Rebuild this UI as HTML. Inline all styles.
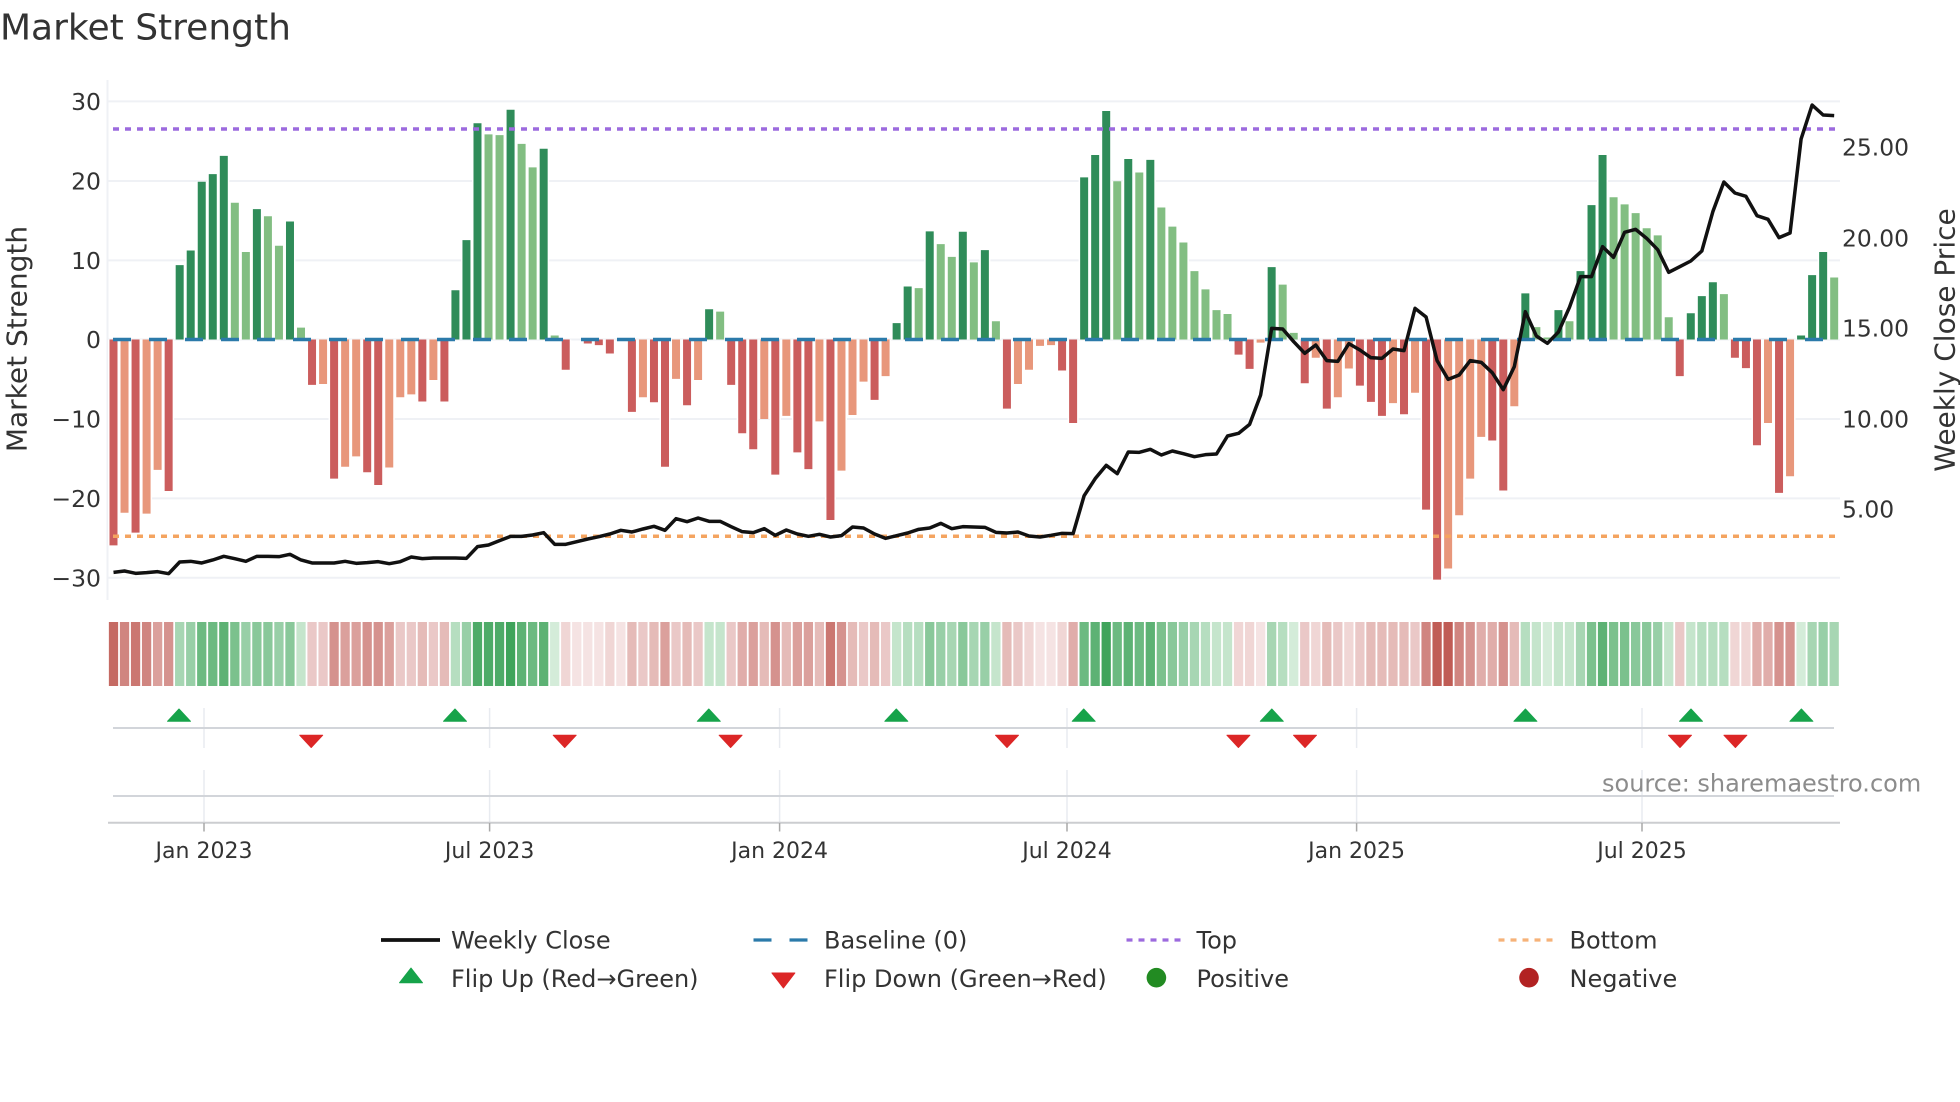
<!DOCTYPE html>
<html lang="en">
<head>
<meta charset="utf-8">
<title>Market Strength</title>
<style>
html,body{margin:0;padding:0;background:#fff;width:1960px;height:1102px;overflow:hidden}
svg{display:block}
text{font-family:"DejaVu Sans","Liberation Sans",sans-serif;fill:#333}
</style>
</head>
<body>
<svg width="1960" height="1102" viewBox="0 0 1960 1102" xmlns="http://www.w3.org/2000/svg">
<rect width="1960" height="1102" fill="#fff"/>
<text x="0" y="39.5" font-size="36">Market Strength</text>

<!-- grid -->
<g stroke="#eff1f5" stroke-width="2" fill="none">
<path d="M108 101.4H1840M108 181H1840M108 260.4H1840M108 339.5H1840M108 419H1840M108 498.4H1840M108 577.8H1840"/>
<path d="M107.5 80V600"/>
</g>

<!-- bars in data coords -->
<defs>
<path id="bd" d="M6 0V-9.36M7 0V-11.2M8 0V-19.85M9 0V-20.8M10 0V-23.1M13 0V-16.4M16 0V-14.85M31 0V-6.2M32 0V-12.5M33 0V-27.2M36 0V-28.9M39 0V-24M54 0V-3.8M71 0V-2.06M72 0V-6.67M74 0V-13.6M77 0V-13.55M79 0V-11.25M88 0V-20.4M89 0V-23.2M90 0V-28.75M92 0V-22.7M94 0V-22.6M105 0V-9.1M128 0V-5.8M131 0V-3.7M133 0V-8.6M134 0V-16.9M135 0V-23.2M143 0V-3.3M144 0V-5.45M145 0V-7.2M153 0V-.5M154 0V-8.1M155 0V-11"/>
<path id="bl" d="M11 0V-17.2M12 0V-11M14 0V-15.5M15 0V-11.8M17 0V-1.5M34 0V-25.8M35 0V-25.7M37 0V-24.6M38 0V-21.65M40 0V-.5M55 0V-3.5M73 0V-6.46M75 0V-12M76 0V-10.4M78 0V-9.7M80 0V-2.3M91 0V-19.9M93 0V-21M95 0V-16.6M96 0V-14.2M97 0V-12.2M98 0V-8.6M99 0V-6.3M100 0V-3.7M101 0V-3.2M106 0V-6.9M107 0V-.84M129 0V-1.55M130 0V-.25M132 0V-2.3M136 0V-17.9M137 0V-17M138 0V-15.9M139 0V-14M140 0V-13.1M141 0V-2.8M146 0V-5.7M156 0V-7.8"/>
<path id="br" d="M0 0V25.9M2 0V24.3M5 0V19.05M18 0V5.7M20 0V17.5M23 0V16.7M24 0V18.3M28 0V7.8M30 0V7.8M41 0V3.8M43 0V.5M44 0V.7M45 0V1.76M47 0V9.1M49 0V7.9M50 0V16M52 0V8.27M56 0V5.7M57 0V11.8M58 0V13.8M60 0V17M62 0V14.2M63 0V16.3M65 0V22.7M69 0V7.6M81 0V8.7M86 0V3.9M87 0V10.5M102 0V1.9M103 0V3.7M108 0V5.5M110 0V8.7M113 0V5.8M114 0V7.85M115 0V9.6M117 0V9.4M119 0V21.4M120 0V30.2M125 0V12.7M126 0V19M142 0V4.6M147 0V2.3M148 0V3.6M149 0V13.3M151 0V19.3"/>
<path id="bo" d="M1 0V21.8M3 0V21.9M4 0V16.4M19 0V5.6M21 0V16M22 0V14.7M25 0V16.1M26 0V7.26M27 0V6.9M29 0V5.1M48 0V7.26M51 0V4.95M53 0V5.1M59 0V10M61 0V9.6M64 0V10.3M66 0V16.5M67 0V9.5M68 0V5.3M70 0V4.6M82 0V5.6M83 0V3.8M84 0V.8M85 0V.7M104 0V.4M109 0V2.3M111 0V7.26M112 0V3.65M116 0V8M118 0V6.7M121 0V28.8M122 0V22.1M123 0V17.5M124 0V12.25M127 0V8.4M150 0V10.5M152 0V17.2"/>
</defs>
<g transform="translate(113.5 339.5) scale(11.03 7.95)" fill="none">
<g stroke="#fff" stroke-width="1">
<use href="#bd"/><use href="#bl"/><use href="#br"/><use href="#bo"/>
</g>
<g stroke-width=".725">
<use href="#bd" stroke="#2f8c59"/>
<use href="#bl" stroke="#82be82"/>
<use href="#br" stroke="#cb5d5d"/>
<use href="#bo" stroke="#e8977b"/>
</g>
</g>

<!-- reference lines -->
<path d="M113 129H1835" stroke="#9c6ade" stroke-width="3.5" stroke-dasharray="6 6" fill="none"/>
<path d="M113 536.3H1835" stroke="#f4a460" stroke-width="3.5" stroke-dasharray="6 6" fill="none"/>
<path d="M113 339.5H1835" stroke="#2b7aaa" stroke-width="3.5" stroke-dasharray="18 18" fill="none"/>

<!-- weekly close -->
<g transform="translate(113.5 320) scale(11.03 .33333)">
<polyline fill="none" stroke="#111" stroke-width="3.5" stroke-linejoin="round" vector-effect="non-scaling-stroke" points="0,757 1,753 2,760 3,758 4,755 5,761 6,726 7,724 8,729 9,720 10,709 11,716 12,724 13,709 14,709 15,710 16,703 17,720 18,729 19,729 20,729 21,724 22,730 23,728 24,725 25,731 26,725 27,711 28,716 29,714 30,714 31,714 32,715 33,680 34,675 35,662 36,649 37,649 38,645 39,638 40,673 41,673 42,665 43,657 44,650 45,642 46,631 47,636 48,627 49,619 50,631 51,596 52,605 53,594 54,604 55,604 56,620 57,635 58,638 59,626 60,646 61,630 62,642 63,649 64,643 65,651 66,647 67,621 68,624 69,642 70,655 71,647 72,639 73,628 74,624 75,610 76,626 77,620 78,621 79,622 80,637 81,639 82,636 83,648 84,651 85,646 86,640 87,641 88,527 89,476 90,436 91,461 92,396 93,397 94,388 95,405 96,393 97,401 98,410 99,404 100,402 101,348 102,340 103,313 104,225 105,25 106,27 107,65 108,100 109,75 110,122 111,124 112,71 113,90 114,113 115,115 116,87 117,92 118,-35 119,-9 120,122 121,178 122,165 123,122 124,127 125,158 126,209 127,140 128,-25 129,48 130,70 131,36 132,-38 133,-130 134,-130 135,-220 136,-188 137,-263 138,-272 139,-245 140,-211 141,-143 142,-160 143,-177 144,-207 145,-325 146,-414 147,-381 148,-371 149,-313 150,-302 151,-247 152,-261 153,-543 154,-645 155,-615 156,-613"/>
</g>

<!-- y ticks -->
<g font-size="23.5" text-anchor="end">
<text x="101" y="110">30</text>
<text x="101" y="189.6">20</text>
<text x="101" y="269">10</text>
<text x="101" y="348.2">0</text>
<text x="101" y="427.6">−10</text>
<text x="101" y="507">−20</text>
<text x="101" y="586.4">−30</text>
</g>
<g font-size="23.4">
<text x="1842" y="155.6">25.00</text>
<text x="1842" y="246.6">20.00</text>
<text x="1842" y="336.6">15.00</text>
<text x="1842" y="427.6">10.00</text>
<text x="1842" y="517.6">5.00</text>
</g>
<text transform="translate(26.5 339) rotate(-90)" font-size="28" text-anchor="middle">Market Strength</text>
<text transform="translate(1954.5 340) rotate(-90)" font-size="28" text-anchor="middle">Weekly Close Price</text>

<!-- heat strip -->
<g transform="translate(113.5 622) scale(11.03 64)" fill="none" stroke-width=".84">
<path stroke="#d4ecd9" d="M40 0v1M107 0v1M130 0v1M153 0v1"/>
<path stroke="#c5e5cc" d="M17 0v1M54 0v1M55 0v1M71 0v1M80 0v1M100 0v1M101 0v1M129 0v1M131 0v1M132 0v1M141 0v1M143 0v1"/>
<path stroke="#b6dec0" d="M31 0v1M72 0v1M73 0v1M99 0v1M106 0v1M128 0v1M144 0v1M145 0v1M146 0v1"/>
<path stroke="#a7d6b3" d="M6 0v1M76 0v1M78 0v1M98 0v1M105 0v1M133 0v1M154 0v1M156 0v1"/>
<path stroke="#98cfa7" d="M7 0v1M12 0v1M15 0v1M32 0v1M75 0v1M79 0v1M97 0v1M140 0v1M155 0v1"/>
<path stroke="#89c89a" d="M13 0v1M14 0v1M16 0v1M74 0v1M77 0v1M96 0v1M138 0v1M139 0v1"/>
<path stroke="#7bc18d" d="M11 0v1M95 0v1M134 0v1M136 0v1M137 0v1"/>
<path stroke="#6cba81" d="M8 0v1M9 0v1M38 0v1M88 0v1M91 0v1M93 0v1"/>
<path stroke="#5db274" d="M10 0v1M37 0v1M39 0v1M89 0v1M92 0v1M94 0v1M135 0v1"/>
<path stroke="#4eab68" d="M33 0v1M34 0v1M35 0v1"/>
<path stroke="#3fa45b" d="M36 0v1M90 0v1"/>
<path stroke="#f5e3e3" d="M42 0v1M43 0v1M44 0v1M46 0v1M84 0v1M85 0v1M104 0v1"/>
<path stroke="#f0d6d5" d="M41 0v1M45 0v1M83 0v1M86 0v1M102 0v1M103 0v1M109 0v1M112 0v1M147 0v1M148 0v1"/>
<path stroke="#eac8c7" d="M18 0v1M19 0v1M26 0v1M27 0v1M29 0v1M48 0v1M51 0v1M53 0v1M56 0v1M68 0v1M70 0v1M82 0v1M108 0v1M111 0v1M113 0v1M118 0v1M142 0v1"/>
<path stroke="#e5bbb8" d="M28 0v1M30 0v1M47 0v1M49 0v1M52 0v1M59 0v1M61 0v1M64 0v1M67 0v1M69 0v1M81 0v1M110 0v1M114 0v1M115 0v1M116 0v1M117 0v1M127 0v1"/>
<path stroke="#e0adaa" d="M57 0v1M87 0v1M124 0v1M125 0v1M149 0v1M150 0v1"/>
<path stroke="#dba09c" d="M4 0v1M21 0v1M22 0v1M25 0v1M50 0v1M58 0v1M62 0v1M63 0v1"/>
<path stroke="#d5928e" d="M5 0v1M20 0v1M23 0v1M24 0v1M60 0v1M66 0v1M123 0v1M126 0v1M151 0v1M152 0v1"/>
<path stroke="#d08580" d="M1 0v1M3 0v1M119 0v1M122 0v1"/>
<path stroke="#cb7771" d="M2 0v1M65 0v1"/>
<path stroke="#c56a63" d="M0 0v1"/>
<path stroke="#c05c55" d="M120 0v1M121 0v1"/>
</g>

<!-- marker rows -->
<g stroke="#e8ebf0" stroke-width="1.5" fill="none">
<path d="M204 708V748M204 770V823M489.6 708V748M489.6 770V823M779.6 708V748M779.6 770V823M1067 708V748M1067 770V823M1356.6 708V748M1356.6 770V823M1642 708V748M1642 770V823"/>
</g>
<path d="M113 728H1834M113 796H1834" stroke="#d2d5da" stroke-width="2" fill="none"/>
<path d="M108 822.7H1840" stroke="#cccdd0" stroke-width="2" fill="none"/>
<path d="M204 823V831.5M489.6 823V831.5M779.6 823V831.5M1067 823V831.5M1356.6 823V831.5M1642 823V831.5" stroke="#a8a8a8" stroke-width="1.5" fill="none"/>

<g fill="#16a34a" stroke="#16a34a" stroke-width="1" stroke-linejoin="round">
<polygon points="179,709 190.5,721.3 167.5,721.3"/>
<polygon points="455,709 466.5,721.3 443.5,721.3"/>
<polygon points="708.8,709 720.3,721.3 697.3,721.3"/>
<polygon points="896.3,709 907.8,721.3 884.8,721.3"/>
<polygon points="1083.7,709 1095.2,721.3 1072.2,721.3"/>
<polygon points="1271.8,709 1283.3,721.3 1260.3,721.3"/>
<polygon points="1525.4,709 1536.9,721.3 1513.9,721.3"/>
<polygon points="1691,709 1702.5,721.3 1679.5,721.3"/>
<polygon points="1801.4,709 1812.9,721.3 1789.9,721.3"/>
</g>
<g fill="#dc2626" stroke="#dc2626" stroke-width="1" stroke-linejoin="round">
<polygon points="311.2,747.5 322.7,735.2 299.7,735.2"/>
<polygon points="564.7,747.5 576.2,735.2 553.2,735.2"/>
<polygon points="730.6,747.5 742.1,735.2 719.1,735.2"/>
<polygon points="1007,747.5 1018.5,735.2 995.5,735.2"/>
<polygon points="1238.4,747.5 1249.9,735.2 1226.9,735.2"/>
<polygon points="1305,747.5 1316.5,735.2 1293.5,735.2"/>
<polygon points="1680,747.5 1691.5,735.2 1668.5,735.2"/>
<polygon points="1735.4,747.5 1746.9,735.2 1723.9,735.2"/>
</g>

<!-- x labels -->
<g font-size="22" text-anchor="middle">
<text x="204" y="858">Jan 2023</text>
<text x="489.6" y="858">Jul 2023</text>
<text x="779.6" y="858">Jan 2024</text>
<text x="1067" y="858">Jul 2024</text>
<text x="1356.6" y="858">Jan 2025</text>
<text x="1642" y="858">Jul 2025</text>
</g>

<text x="1602" y="791.7" font-size="24" style="fill:#8c8c8c">source: sharemaestro.com</text>

<!-- legend -->
<path d="M381 940H440" stroke="#111" stroke-width="3.8" fill="none"/>
<path d="M753.5 940H808" stroke="#2b7aaa" stroke-width="3.2" stroke-dasharray="18 18" fill="none"/>
<path d="M1126.5 940H1181" stroke="#9c6ade" stroke-width="3.2" stroke-dasharray="6 6" fill="none"/>
<path d="M1498.5 940H1554" stroke="#f4a460" stroke-width="3.2" stroke-dasharray="6 6" opacity=".85" fill="none"/>
<polygon points="411,968 422.5,982.8 399.5,982.8" fill="#16a34a" stroke="#16a34a" stroke-width="1" stroke-linejoin="round"/>
<polygon points="783.4,988 794.9,973 771.9,973" fill="#dc2626" stroke="#dc2626" stroke-width="1" stroke-linejoin="round"/>
<circle cx="1156.4" cy="977.7" r="9.8" fill="#228b22"/>
<circle cx="1529" cy="977.7" r="9.8" fill="#b22222"/>
<g font-size="24">
<text x="451" y="948.5">Weekly Close</text>
<text x="824" y="948.5">Baseline (0)</text>
<text x="1196.5" y="948.5">Top</text>
<text x="1569.5" y="948.5">Bottom</text>
<text x="451" y="987">Flip Up (Red→Green)</text>
<text x="824" y="987">Flip Down (Green→Red)</text>
<text x="1196.5" y="987">Positive</text>
<text x="1569.5" y="987">Negative</text>
</g>
</svg>
</body>
</html>
